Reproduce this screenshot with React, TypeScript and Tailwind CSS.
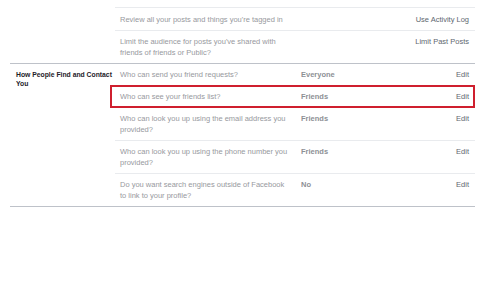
import React from "react";

type Row = { desc: React.ReactNode; value?: string; action: string; highlight?: boolean };

function SettingRow({ row, last }: { row: Row; last?: boolean }) {
  return (
    <div
      className={`relative flex items-start pl-[5px] pr-[6px] py-[5px] leading-[11px] ${
        last ? "" : "border-b border-[#e9ebee]"
      }`}
    >
      <div className="w-[181px] shrink-0 text-[#97999e]">{row.desc}</div>
      <div className="flex-1 font-bold text-[#8d9095]">{row.value ?? ""}</div>
      <div className="text-right text-[#606770]">{row.action}</div>
      {row.highlight ? (
        <span className="pointer-events-none absolute -left-[5px] right-0 -top-[1px] -bottom-[1px] border-2 border-[#cf1f2e]" />
      ) : null}
    </div>
  );
}

export default function App() {
  const findRows: Row[] = [
    { desc: "Who can send you friend requests?", value: "Everyone", action: "Edit" },
    { desc: "Who can see your friends list?", value: "Friends", action: "Edit", highlight: true },
    {
      desc: (
        <>
          Who can look you up using the email address you
          <br />
          provided?
        </>
      ),
      value: "Friends",
      action: "Edit",
    },
    {
      desc: (
        <>
          Who can look you up using the phone number you
          <br />
          provided?
        </>
      ),
      value: "Friends",
      action: "Edit",
    },
    {
      desc: (
        <>
          Do you want search engines outside of Facebook
          <br />
          to link to your profile?
        </>
      ),
      value: "No",
      action: "Edit",
    },
  ];

  return (
    <div className="w-[480px] h-[284px] overflow-hidden bg-white font-['Liberation_Sans',Arial,Helvetica,sans-serif] text-[7.5px]">
      <div className="ml-[10px] w-[465px]">
        <div className="flex -mt-[15px]">
          <div className="w-[105px] shrink-0" />
          <div className="flex-1">
            <div className="border-b border-[#e9ebee] pl-[5px] pr-[6px] py-[5px] leading-[12px]">
              <div className="text-[#97999e]">Who can see your future posts?</div>
            </div>
            <div className="flex border-b border-[#e9ebee] pl-[5px] pr-[6px] py-[5.5px] leading-[11px]">
              <div className="flex-1 text-[#97999e]">Review all your posts and things you're tagged in</div>
              <div className="text-right text-[#606770]">Use Activity Log</div>
            </div>
            <div className="flex pl-[5px] pr-[6px] py-[5px] leading-[11px]">
              <div className="flex-1 text-[#97999e]">
                Limit the audience for posts you've shared with
                <br />
                friends of friends or Public?
              </div>
              <div className="text-right text-[#606770]">Limit Past Posts</div>
            </div>
          </div>
        </div>
        <div className="flex border-t border-b border-[#bec2c9]">
          <div className="w-[105px] shrink-0 pl-[6px] pt-[5.5px] font-bold text-[6.8px] leading-[9.5px] text-[#1d2129] whitespace-nowrap">
            How People Find and Contact
            <br />
            You
          </div>
          <div className="flex-1">
            {findRows.map((r, i) => (
              <SettingRow key={i} row={r} last={i === findRows.length - 1} />
            ))}
          </div>
        </div>
      </div>
    </div>
  );
}
